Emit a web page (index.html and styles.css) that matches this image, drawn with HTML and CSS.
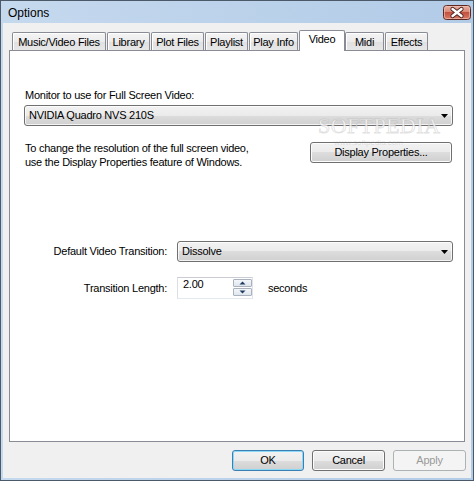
FILE: index.html
```html
<!DOCTYPE html>
<html>
<head>
<meta charset="utf-8">
<title>Options</title>
<link rel="stylesheet" href="styles.css">
</head>
<body>
<div class="window">
  <div class="titlebar">
    <span class="title">Options</span>
    <div class="close">
      <svg width="28" height="15" viewBox="0 0 28 15">
        <defs>
          <linearGradient id="cg" x1="0" y1="0" x2="0" y2="1">
            <stop offset="0" stop-color="#eab2a6"/>
            <stop offset="0.45" stop-color="#d98a78"/>
            <stop offset="0.5" stop-color="#c4513e"/>
            <stop offset="1" stop-color="#d97d68"/>
          </linearGradient>
        </defs>
        <rect x="0.5" y="0.5" width="27" height="14" rx="3" fill="url(#cg)" stroke="#5e2820"/>
        <rect x="1.5" y="1.5" width="25" height="12" rx="2" fill="none" stroke="#f3c9bf" stroke-opacity="0.6"/>
        <path d="M9.5 4 L18.5 11 M18.5 4 L9.5 11" stroke="#4a2420" stroke-width="4.2" stroke-linecap="round"/>
        <path d="M9.5 4 L18.5 11 M18.5 4 L9.5 11" stroke="#ffffff" stroke-width="2.4" stroke-linecap="round"/>
      </svg>
    </div>
  </div>
  <div class="client">
    <div class="tabs">
      <div class="tab t-music">Music/Video Files</div>
      <div class="tab t-library">Library</div>
      <div class="tab t-plot">Plot Files</div>
      <div class="tab t-playlist">Playlist</div>
      <div class="tab t-playinfo">Play Info</div>
      <div class="tab t-video selected">Video</div>
      <div class="tab t-midi">Midi</div>
      <div class="tab t-effects">Effects</div>
    </div>
    <div class="panel">
      <div class="label-top">Monitor to use for Full Screen Video:</div>
      <div class="combo combo-wide">
        <span class="combo-value">NVIDIA Quadro NVS 210S</span>
        <svg class="combo-arrow" width="7" height="4" viewBox="0 0 7 4"><path d="M0 0 H7 L3.5 4 Z" fill="#000"/></svg>
      </div>
      <div class="res-row">
        <p class="note">To change the resolution of the full screen video,<br>use the Display Properties feature of Windows.</p>
        <button class="btn btn-display">Display Properties...</button>
      </div>
      <div class="form-row trans-row">
        <span class="form-label">Default Video Transition:</span>
        <div class="combo combo-trans">
          <span class="combo-value">Dissolve</span>
          <svg class="combo-arrow" width="7" height="4" viewBox="0 0 7 4"><path d="M0 0 H7 L3.5 4 Z" fill="#000"/></svg>
        </div>
      </div>
      <div class="form-row len-row">
        <span class="form-label">Transition Length:</span>
        <div class="spin">
          <span class="spin-value">2.00</span>
          <div class="spin-btns">
            <div class="spin-btn"><svg width="7" height="4" viewBox="0 0 7 4"><path d="M3.5 0.5 L6.5 3.5 L0.5 3.5 Z" fill="#1e3a62"/></svg></div>
            <div class="spin-btn"><svg width="7" height="4" viewBox="0 0 7 4"><path d="M0.5 0.5 L6.5 0.5 L3.5 3.5 Z" fill="#1e3a62"/></svg></div>
          </div>
        </div>
        <span class="seconds">seconds</span>
      </div>
      <div class="watermark">SOFTPEDIA</div>
      <div class="watermark-small">www.softpedia.com</div>
    </div>
    <div class="buttons">
      <button class="btn btn-ok">OK</button>
      <button class="btn btn-cancel">Cancel</button>
      <button class="btn btn-apply">Apply</button>
    </div>
  </div>
</div>
</body>
</html>
```
FILE: styles.css
```css
* { box-sizing: border-box; }

html, body {
  margin: 0;
  padding: 0;
  background: #ffffff;
}

body {
  font-family: "Liberation Sans", Arial, sans-serif;
  font-size: 11px;
  line-height: 13px;
  letter-spacing: -0.25px;
  color: #000;
}

.window {
  width: 474px;
  height: 481px;
  border: 1px solid #4b5968;
  background: linear-gradient(to right, #c5d9ee, #b2cbe7);
  display: flex;
  flex-direction: column;
}

.titlebar {
  height: 22px;
  flex: none;
  display: flex;
  align-items: flex-start;
}

.title {
  font-size: 12px;
  line-height: 14px;
  letter-spacing: 0;
  margin: 5px 0 0 7px;
}

.close {
  margin: 4px 2px 0 auto;
  width: 28px;
  height: 15px;
}

.close svg { display: block; }

.client {
  margin: 0 2px;
  height: 455px;
  flex: none;
  background: #f0f0f0;
  padding-top: 7px;
}

.tabs {
  display: flex;
  align-items: flex-end;
  height: 20px;
  margin-left: 9px;
  position: relative;
  z-index: 1;
}

.tab {
  height: 18px;
  border: 1px solid #898c95;
  border-bottom: none;
  border-radius: 2px 2px 0 0;
  background: linear-gradient(#f4f4f4, #ececec 50%, #e0e0e0 50%, #e7e7e7);
  box-shadow: inset 1px 1px 0 #ffffff;
  margin-right: 1px;
  text-align: center;
  padding-top: 3px;
  white-space: nowrap;
}

.t-music { width: 94px; }
.t-library { width: 43px; }
.t-plot { width: 53px; }
.t-playlist { width: 43px; }
.t-playinfo { width: 49px; }
.t-video { width: 46px; margin-right: 0; }
.t-midi { width: 39px; }
.t-effects { width: 43px; }

.tab.selected {
  height: 21px;
  margin-bottom: -1px;
  background: #ffffff;
  box-shadow: none;
  padding-top: 2px;
}

.panel {
  position: relative;
  margin-left: 6px;
  width: 456px;
  height: 392px;
  border: 1px solid #898c95;
  background: #ffffff;
  padding: 38px 11px 0 14px;
}

.label-top { padding-left: 1px; }

.combo {
  display: flex;
  align-items: center;
  height: 21px;
  border: 1px solid #707070;
  border-radius: 3px;
  background: linear-gradient(#f2f2f2, #ebebeb 50%, #dddddd 50%, #d0d0d0);
  box-shadow: inset 0 0 0 1px rgba(255, 255, 255, 0.75);
  padding: 0 4px 0 4px;
}

.combo-value { flex: 1; }
.combo-arrow { display: block; flex: none; }

.combo-wide {
  margin-top: 3px;
  width: 429px;
}

.res-row {
  display: flex;
  justify-content: space-between;
  align-items: flex-start;
  margin-top: 16px;
  height: 28px;
}

.note {
  margin: -1px 0 0 0;
  padding-left: 1px;
  line-height: 14px;
}

.btn {
  font: inherit;
  letter-spacing: inherit;
  color: #000;
  height: 21px;
  padding: 0;
  border: 1px solid #707070;
  border-radius: 3px;
  background: linear-gradient(#f2f2f2, #ebebeb 50%, #dddddd 50%, #cfcfcf);
  box-shadow: inset 0 0 0 1px #fcfcfc;
}

.btn-display {
  width: 142px;
  margin-right: 1px;
}

.form-row {
  display: flex;
  align-items: center;
}

.form-label {
  width: 143px;
  margin-right: 10px;
  text-align: right;
}

.trans-row { margin-top: 71px; }

.combo-trans { width: 276px; }

.len-row { margin-top: 15px; }

.spin {
  display: flex;
  width: 76px;
  height: 22px;
  border: 1px solid;
  border-color: #c9ccd3 #e2e3ea #e3e9ef #dbdfe6;
  background: #ffffff;
}

.spin-value {
  flex: 1;
  padding-left: 5px;
}

.spin-btns {
  display: flex;
  flex-direction: column;
  gap: 1px;
  padding-top: 1px;
  width: 19px;
  flex: none;
}

.spin-btn {
  height: 8px;
  border: 1px solid #a9b2bd;
  border-radius: 1px;
  background: linear-gradient(#f4f7fa, #dfe6ee);
  display: flex;
  align-items: center;
  justify-content: center;
}

.spin-btn svg { display: block; }

.seconds { margin-left: 15px; }

.watermark {
  position: absolute;
  left: 308px;
  top: 64px;
  font-family: "Liberation Serif", "Times New Roman", serif;
  font-size: 22px;
  line-height: 22px;
  letter-spacing: 0.4px;
  color: rgba(255, 255, 255, 0.75);
  -webkit-text-stroke: 1px rgba(150, 150, 150, 0.28);
  pointer-events: none;
}

.watermark-small {
  position: absolute;
  left: 324px;
  top: 88px;
  font-size: 8px;
  line-height: 8px;
  letter-spacing: 0;
  color: rgba(150, 150, 150, 0.25);
  pointer-events: none;
}

.buttons {
  display: flex;
  justify-content: flex-end;
  gap: 8px;
  margin-top: 8px;
  padding-right: 5px;
}

.btn-ok {
  width: 72px;
  border-color: #3c7fb1;
  box-shadow: inset 0 0 0 1px #8cd8f7;
}

.btn-cancel { width: 73px; }

.btn-apply {
  width: 73px;
  border-color: #adb2b5;
  background: #f4f4f4;
  box-shadow: none;
  color: #9a9a9a;
}
```
